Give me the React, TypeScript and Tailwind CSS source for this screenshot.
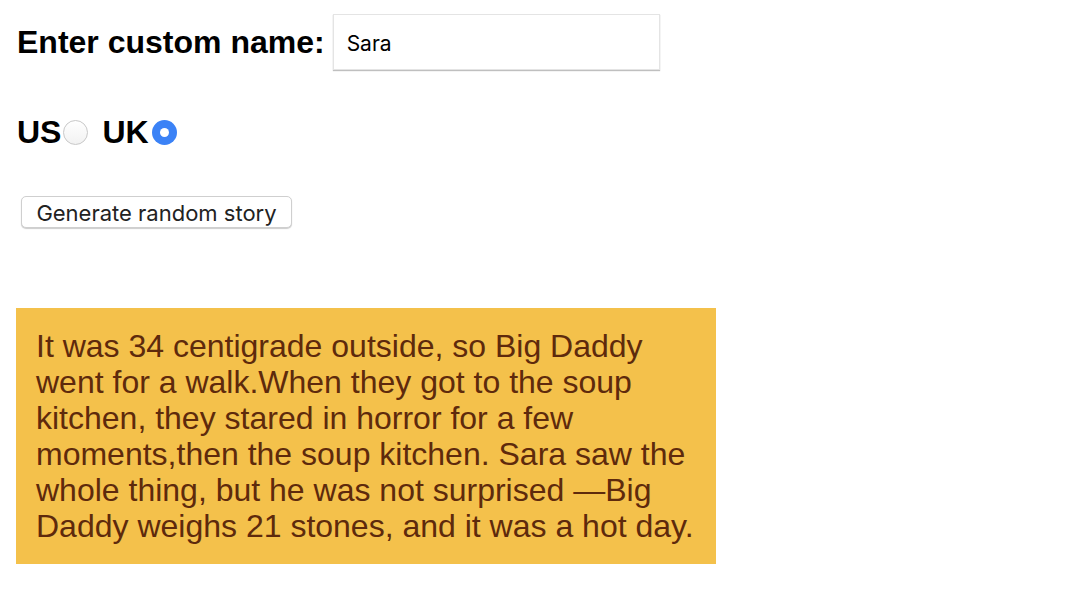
import React from 'react';

const App: React.FC = () => {
  return (
    <div className="min-h-[610px] bg-white font-['Liberation_Sans',Arial,sans-serif] text-black">
      <div className="flex items-center pl-[17px] pt-[14px]">
        <label className="text-[32px] font-bold leading-none">Enter custom name:</label>
        <div className="ml-[8px] flex h-[56px] w-[327px] items-center border border-[#e4e4e4] pl-[13px] pt-[3px] shadow-[0_1px_1px_rgba(0,0,0,0.25)]">
          <span className="font-['Inter',sans-serif] text-[21px]">Sara</span>
        </div>
      </div>

      <div className="mt-[46px] flex items-center pl-[17px]">
        <span className="text-[32px] font-bold leading-none">US</span>
        <span className="ml-[2px] h-[25px] w-[25px] rounded-full border border-[#c8c8c8] bg-gradient-to-b from-white to-[#f2f2f2]"></span>
        <span className="ml-[14px] text-[32px] font-bold leading-none">UK</span>
        <span className="ml-[3px] flex h-[25px] w-[25px] items-center justify-center rounded-full bg-[#3b82f6]">
          <span className="h-[9px] w-[9px] rounded-full bg-white"></span>
        </span>
      </div>

      <div className="mt-[48px] pl-[21px]">
        <button className="h-[32px] w-[271px] rounded-[5px] border border-[#cfcfcf] bg-white pt-[2px] font-['Inter',sans-serif] text-[22px] leading-none text-[#222] shadow-[0_1px_1px_rgba(0,0,0,0.2)]">
          Generate random story
        </button>
      </div>

      <div className="ml-[16px] mt-[80px] w-[700px] bg-[#f4c14b] p-[20px] text-[32px] leading-[36px] text-[#5e2a0c]">
        It was 34 centigrade outside, so Big Daddy went for a walk.When they got to the soup kitchen, they stared in horror for a few moments,then the soup kitchen. Sara saw the whole thing, but he was not surprised —Big Daddy weighs 21 stones, and it was a hot day.
      </div>
    </div>
  );
};

export default App;
